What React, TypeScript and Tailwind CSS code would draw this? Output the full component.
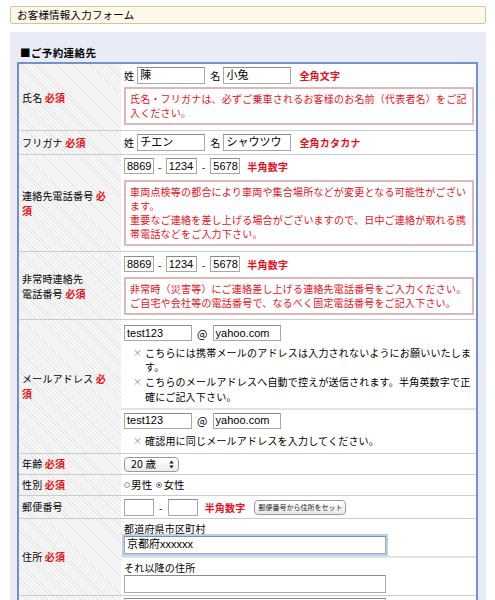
import React from "react";

const RED = "text-[#e8101a]";

function Req() {
  return <span className={`font-bold ${RED}`}>必須</span>;
}

function Field({ value, className }: { value: string; className: string }) {
  return (
    <div
      className={`flex shrink-0 items-center overflow-hidden whitespace-nowrap border border-[#a8a8a8] border-t-[#8c8c8c] bg-white px-[2px] text-[11px] leading-none tracking-normal text-black font-['Liberation_Sans','Noto_Sans_CJK_JP',sans-serif] ${className}`}
    >
      {value}
    </div>
  );
}

function Note({ children, className }: { children: React.ReactNode; className: string }) {
  return (
    <div className={`border-2 border-[#dcb9b9] bg-white px-[4px] py-[3px] leading-[14px] ${RED} ${className}`}>
      {children}
    </div>
  );
}

function Row({
  label,
  children,
  cell,
}: {
  label: React.ReactNode;
  children: React.ReactNode;
  cell: string;
}) {
  return (
    <div className="flex border-b border-[#cccccc]">
      <div className="flex w-[102px] shrink-0 items-center bg-[repeating-linear-gradient(45deg,#e8e8e8_0px,#e8e8e8_1px,#f7f7f7_1px,#f7f7f7_3px)] pl-[3px] pr-[8px] leading-[15px]">
        <div>{label}</div>
      </div>
      <div className={`min-w-0 flex-1 bg-white ${cell}`}>{children}</div>
    </div>
  );
}

function Phone() {
  return (
    <div className="flex items-center">
      <Field value="8869" className="h-[16px] w-[30px] px-[2px]" />
      <span className="mx-[4px]">-</span>
      <Field value="1234" className="h-[16px] w-[31px] px-[2px]" />
      <span className="mx-[5px]">-</span>
      <Field value="5678" className="h-[16px] w-[30px] px-[2px]" />
      <span className={`ml-[7px] font-bold ${RED}`}>半角数字</span>
    </div>
  );
}

function Mark({ children }: { children: React.ReactNode }) {
  return (
    <li className="flex">
      <span className="w-[21px] shrink-0 pl-[9px] text-[9px] text-[#888888]">×</span>
      <span>{children}</span>
    </li>
  );
}

function Email() {
  return (
    <div className="flex items-center">
      <Field value="test123" className="h-[16px] w-[68px]" />
      <span className="mx-[5px] text-[11px]">@</span>
      <Field value="yahoo.com" className="h-[16px] w-[68px]" />
    </div>
  );
}

export default function App() {
  return (
    <div className="min-h-[600px] w-[495px] bg-white pt-[6px] text-[10px] tracking-[0.2px] text-black font-['Noto_Sans_CJK_JP','Noto_Sans',sans-serif]">
      <div className="mx-[10px] w-[476px] rounded-[2px] border border-[#d8c48e] bg-[#fdf9ea] px-[6px] text-[10.5px] leading-[16px]">
        お客様情報入力フォーム
      </div>

      <div className="mx-[10px] mt-[8px] w-[476px] bg-[#e8ecf6] pl-[7px] pr-[8px] pt-[14px]">
        <h2 className="pl-[3px] text-[10.5px] font-bold leading-[14px] tracking-[0.4px]">■ご予約連絡先</h2>
        <div className="mt-[2px] border-2 border-[#7690cb] bg-white">
          <Row label={<>氏名 <Req /></>} cell="pl-[3px] pr-[2px] pt-[3px] pb-[5px]">
            <div className="flex items-center">
              <span>姓</span>
              <Field value="陳" className="ml-[3px] h-[17px] w-[68px]" />
              <span className="ml-[5px]">名</span>
              <Field value="小兔" className="ml-[3px] h-[17px] w-[68px]" />
              <span className={`ml-[8px] font-bold ${RED}`}>全角文字</span>
            </div>
            <Note className="mt-[3px]">
              氏名・フリガナは、必ずご乗車されるお客様のお名前（代表者名）をご記入ください。
            </Note>
          </Row>

          <Row label={<>フリガナ <Req /></>} cell="pl-[3px] pr-[2px] pt-[3px] pb-[3px]">
            <div className="flex items-center">
              <span>姓</span>
              <Field value="チエン" className="ml-[3px] h-[17px] w-[68px]" />
              <span className="ml-[5px]">名</span>
              <Field value="シャウツウ" className="ml-[3px] h-[17px] w-[68px]" />
              <span className={`ml-[8px] font-bold ${RED}`}>全角カタカナ</span>
            </div>
          </Row>

          <Row label={<>連絡先電話番号 <Req /></>} cell="pl-[3px] pr-[2px] pt-[3px] pb-[5px]">
            <Phone />
            <Note className="mt-[6px]">
              車両点検等の都合により車両や集合場所などが変更となる可能性がございます。
              <br />
              重要なご連絡を差し上げる場合がございますので、日中ご連絡が取れる携帯電話などをご入力下さい。
            </Note>
          </Row>

          <Row
            label={
              <>
                非常時連絡先
                <br />
                電話番号 <Req />
              </>
            }
            cell="pl-[3px] pr-[2px] pt-[4px] pb-[4px]"
          >
            <Phone />
            <Note className="mt-[5px]">
              非常時（災害等）にご連絡差し上げる連絡先電話番号をご入力ください。
              <br />
              ご自宅や会社等の電話番号で、なるべく固定電話番号をご記入下さい。
            </Note>
          </Row>

          <Row label={<>メールアドレス <Req /></>} cell="">
            <div className="pl-[3px] pr-[2px] pt-[5px] pb-[4px]">
              <Email />
              <ul className="mt-[4px] leading-[14.7px]">
                <Mark>こちらには携帯メールのアドレスは入力されないようにお願いいたします。</Mark>
                <Mark>こちらのメールアドレスへ自動で控えが送信されます。半角英数字で正確にご記入下さい。</Mark>
              </ul>
            </div>
            <div className="border-t-2 border-[#e2e2e2] pl-[3px] pr-[2px] pt-[2px] pb-[4px]">
              <Email />
              <ul className="mt-[5px] leading-[14.7px]">
                <Mark>確認用に同じメールアドレスを入力してください。</Mark>
              </ul>
            </div>
          </Row>

          <Row label={<>年齢 <Req /></>} cell="pl-[3px] pr-[2px] pt-[3px] pb-[2px]">
            <div className="flex h-[15px] w-[55px] items-center justify-between rounded-[4px] border border-[#9a9a9a] bg-[linear-gradient(#ffffff,#ececec)] pl-[6px] pr-[4px] text-[10.5px]">
              <span>20 歳</span>
              <svg width="5" height="9" viewBox="0 0 5 9">
                <path d="M2.5 0.5 L4.8 3.6 H0.2 Z M2.5 8.5 L4.8 5.4 H0.2 Z" fill="#222" />
              </svg>
            </div>
          </Row>

          <Row label={<>性別 <Req /></>} cell="pl-[3px] pr-[2px] pt-[3px] pb-[2px]">
            <div className="flex h-[15px] items-center text-[10.5px]">
              <span className="mr-[1px] inline-block h-[6px] w-[6px] rounded-full border border-[#9a9a9a] bg-[#f4f4f4]" />
              <span>男性</span>
              <span className="ml-[4px] mr-[1px] flex h-[6px] w-[6px] items-center justify-center rounded-full border border-[#8a8a8a] bg-[#f4f4f4]">
                <span className="h-[2px] w-[2px] rounded-full bg-[#333]" />
              </span>
              <span>女性</span>
            </div>
          </Row>

          <Row label="郵便番号" cell="pl-[3px] pr-[2px] pt-[3px] pb-[2px]">
            <div className="flex items-center">
              <Field value="" className="h-[17px] w-[30px]" />
              <span className="mx-[5px]">-</span>
              <Field value="" className="h-[17px] w-[30px]" />
              <span className={`ml-[7px] font-bold ${RED}`}>半角数字</span>
              <button className="ml-[9px] h-[15px] rounded-[4px] border border-[#9a9a9a] bg-[linear-gradient(#ffffff,#e9e9e9)] px-[3px] text-[7px] leading-none tracking-normal text-[#222]">
                郵便番号から住所をセット
              </button>
            </div>
          </Row>

          <Row label={<>住所 <Req /></>} cell="">
            <div className="pl-[3px] pr-[2px] pt-[3px] pb-[2px]">
              <div className="leading-[14px]">都道府県市区町村</div>
              <Field
                value="京都府xxxxxx"
                className="h-[18px] w-[262px] border-[#6d9de0] border-t-[#6d9de0] shadow-[0_0_0_2px_#b4cff1]"
              />
            </div>
            <div className="border-t-2 border-[#e2e2e2] pl-[3px] pr-[2px] pt-[3px] pb-[2px]">
              <div className="leading-[14px]">それ以降の住所</div>
              <Field value="" className="h-[18px] w-[262px]" />
            </div>
          </Row>

          <Row label="" cell="pl-[3px] pr-[2px] pt-[2px] pb-[4px]">
            <Field value="" className="h-[18px] w-[262px] border-[#a0a0a0]" />
            <div className="h-[20px]" />
          </Row>
        </div>
      </div>
    </div>
  );
}
